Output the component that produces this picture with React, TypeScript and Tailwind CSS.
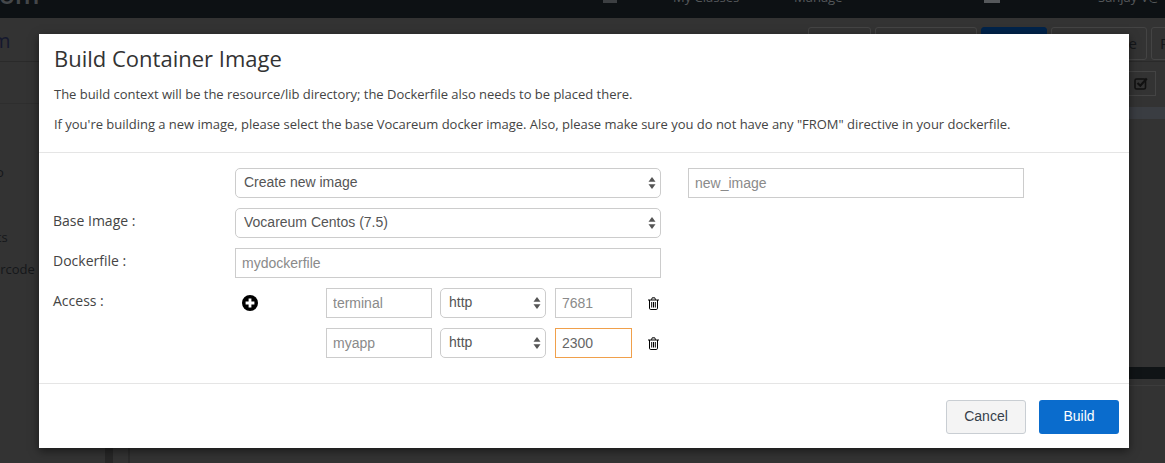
import React from "react";

const liberation = "font-['Liberation_Sans',Arial,sans-serif]";

function Stepper() {
  return (
    <svg className="absolute right-[5px] top-1/2 -translate-y-1/2 pointer-events-none" width="8" height="14" viewBox="0 0 8 14">
      <path d="M4 1 L7.5 5.8 H0.5 Z" fill="#555" />
      <path d="M4 13 L7.5 8.2 H0.5 Z" fill="#555" />
    </svg>
  );
}

function Select({ value, width }: { value: string; width: string }) {
  return (
    <div className={`relative ${width} h-[30px]`}>
      <select
        defaultValue={value}
        className={`appearance-none w-full h-full rounded-[5px] border border-[#ccc] bg-white pl-2 pb-[2px] text-[14px] text-[#555] outline-none ${liberation}`}
      >
        <option>{value}</option>
      </select>
      <Stepper />
    </div>
  );
}

function TextInput({ placeholder, value, width, focus }: { placeholder?: string; value?: string; width: string; focus?: boolean }) {
  return (
    <input
      readOnly
      placeholder={placeholder}
      value={value}
      className={`${width} h-[30px] border ${focus ? "border-[#f0a04b]" : "border-[#ccc]"} bg-white px-[6px] text-[14px] text-[#666] placeholder:text-[#8a8a8a] outline-none ${liberation}`}
    />
  );
}

function Trash() {
  return (
    <svg width="11" height="13" viewBox="0 0 11 13" fill="none" stroke="#000" strokeWidth="1" className="ml-[16px]">
      <path d="M0 3 H11" />
      <path d="M3.5 2.8 L4.2 0.8 H6.8 L7.5 2.8" />
      <path d="M1.5 3 V11.2 Q1.5 12.5 2.8 12.5 H8.2 Q9.5 12.5 9.5 11.2 V3" />
      <path d="M3.7 5 V10.5 M5.5 5 V10.5 M7.3 5 V10.5" />
    </svg>
  );
}

function Plus() {
  return (
    <svg width="16" height="16" viewBox="0 0 16 16">
      <circle cx="8" cy="8" r="8" fill="#000" />
      <path d="M8 3.6 V12.4 M3.6 8 H12.4" stroke="#fff" strokeWidth="2.8" />
    </svg>
  );
}

function AccessRow({ name, port, showPlus, focus, value }: { name: string; port: string; showPlus?: boolean; focus?: boolean; value?: boolean }) {
  return (
    <div className="flex items-center h-[30px]">
      <div className="w-[91px] pl-[7px] flex items-center">{showPlus && <Plus />}</div>
      <TextInput placeholder={name} width="w-[106px]" />
      <div className="w-[8px]" />
      <Select value="http" width="w-[106px]" />
      <div className="w-[9px]" />
      <TextInput {...(value ? { value: port } : { placeholder: port })} width="w-[77px]" focus={focus} />
      <Trash />
    </div>
  );
}

function Label({ children }: { children: React.ReactNode }) {
  return <div className="w-[181px] shrink-0 text-[14px] text-[#444] leading-[26px] h-[30px] -indent-px">{children}</div>;
}

function BackButton({ width, children, navy }: { width: string; children?: React.ReactNode; navy?: boolean }) {
  return (
    <div className={`${width} h-[33px] shrink-0 rounded-[3px] border text-[15px] leading-[31px] text-[#15171a] overflow-hidden ${navy ? "bg-[#00234a] border-[#00234a]" : "border-[#444]"}`}>
      {children}
    </div>
  );
}

export default function App() {
  return (
    <div className="relative w-[1165px] h-[463px] overflow-hidden bg-[#333333] font-['Open_Sans',sans-serif]">
      {/* dimmed page behind the dialog */}
      <div className="h-[18px] bg-[#0d1114] flex items-start overflow-hidden text-[#55585b] text-[13px] leading-[13px] whitespace-nowrap">
        <span className="text-[26px] leading-[26px] font-semibold -mt-[19px] text-[#44474a] w-[604px] -ml-[1px] shrink-0">om</span>
        <div className="w-[14px] h-[3px] bg-[#3c3f42] shrink-0" />
        <span className="ml-[56px] w-[121px] -mt-[9px] shrink-0">My Classes</span>
        <span className="w-[190px] -mt-[9px] shrink-0">Manage</span>
        <div className="w-[16px] h-[3px] bg-[#55585b] shrink-0" />
        <span className="ml-[98px] -mt-[9px] shrink-0">Sanjay V@</span>
      </div>
      <div className="h-[44px] border-b border-[#2a2a2a] flex pt-[9px] overflow-hidden">
        <span className="text-[20px] leading-[24px] text-[#15182e] pt-[2px] -ml-[20px] w-[828px] shrink-0">om</span>
        <div className="flex gap-[4px] shrink-0">
          <BackButton width="w-[63px]" />
          <BackButton width="w-[102px]" />
          <BackButton width="w-[66px]" navy />
          <BackButton width="w-[96px]"><div className="text-right pr-[9px]">e</div></BackButton>
          <BackButton width="w-[60px]"><div className="pl-[8px]">R</div></BackButton>
        </div>
      </div>
      <div className="flex h-[401px]">
        <div className="w-[105px] shrink-0 text-[13px] leading-[18px] text-[#15171a] whitespace-nowrap">
          <div className="h-[42px] border-b border-[#2e2e2e]" />
          <div className="pt-[59px] -ml-[20px]">Info</div>
          <div className="pt-[47px] -ml-[36px]">Results</div>
          <div className="pt-[14px] -ml-[31px]">Watercode</div>
        </div>
        <div className="w-[8px] shrink-0 bg-[#272727]" />
        <div className="w-[15px] shrink-0 border-r-2 border-[#2b2b2b] box-content" />
        <div className="flex-1 flex flex-col pt-[9px]">
          <div className="self-end mr-[9px] w-[31px] h-[25px] border border-[#444] flex items-center justify-center">
            <svg width="14" height="13" viewBox="0 0 14 13" fill="none" stroke="#111" strokeWidth="1.6">
              <rect x="1" y="2" width="10.5" height="10" rx="1.5" />
              <path d="M3.5 6 L6.3 8.7 L12.8 1.5" strokeWidth="2.2" />
            </svg>
          </div>
          <div className="mt-[11px] h-[12px] bg-[#3a3d42]" />
          <div className="mt-[248px] h-[12px] bg-[#101416]" />
          <div className="mt-[6px] h-[1px] bg-[#3c3c3c]" />
        </div>
      </div>

      {/* dialog */}
      <div className="absolute left-[39px] top-[34px] w-[1090px] h-[414px] bg-white shadow-[0_3px_9px_rgba(0,0,0,0.5)] flex flex-col">
        <div className="h-[119px] border-b border-[#e5e5e5] px-[15px] pt-[9px] shrink-0">
          <h4 className="text-[22px] leading-[30px] text-[#333]">Build Container Image</h4>
          <p className="mt-[12px] text-[13px] tracking-[-0.02px] leading-[18px] text-[#444]">The build context will be the resource/lib directory; the Dockerfile also needs to be placed there.</p>
          <p className="mt-[12px] text-[13px] tracking-[-0.02px] leading-[18px] text-[#444]">If you're building a new image, please select the base Vocareum docker image. Also, please make sure you do not have any "FROM" directive in your dockerfile.</p>
        </div>

        <div className="flex-1 px-[15px] pt-[15px] flex flex-col gap-[10px]">
          <div className="flex">
            <Label>{""}</Label>
            <Select value="Create new image" width="w-[426px]" />
            <div className="w-[27px]" />
            <TextInput placeholder="new_image" width="w-[336px]" />
          </div>
          <div className="flex">
            <Label>Base Image :</Label>
            <Select value="Vocareum Centos (7.5)" width="w-[426px]" />
          </div>
          <div className="flex">
            <Label>Dockerfile :</Label>
            <TextInput placeholder="mydockerfile" width="w-[426px]" />
          </div>
          <div className="flex">
            <Label>Access :</Label>
            <div className="flex flex-col gap-[10px]">
              <AccessRow name="terminal" port="7681" showPlus />
              <AccessRow name="myapp" port="2300" focus value />
            </div>
          </div>
        </div>

        <div className="h-[65px] border-t border-[#e5e5e5] shrink-0 flex items-center justify-end gap-[13px] px-[10px] pt-[1px]">
          <button className={`w-[80px] h-[34px] rounded-[3px] border border-[#c9ced3] bg-[#f4f4f4] text-[14px] text-[#36404a] ${liberation}`}>Cancel</button>
          <button className={`w-[80px] h-[34px] rounded-[3px] bg-[#0a6ccd] text-[14px] text-white ${liberation}`}>Build</button>
        </div>
      </div>
    </div>
  );
}
